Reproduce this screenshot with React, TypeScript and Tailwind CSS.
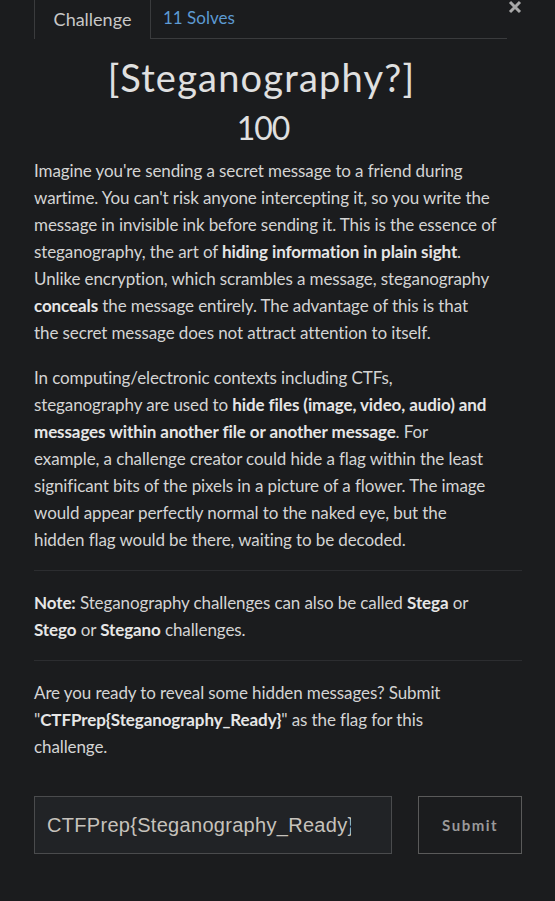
import React from "react";

const B = ({ children }: { children: React.ReactNode }) => <b className="text-[#e6e6e6]">{children}</b>;

export default function App() {
  return (
    <div className="min-h-[901px] w-[555px] bg-[#1b1c1e] text-[#d4d4d4] overflow-hidden" style={{ fontFamily: "Lato, 'Open Sans', sans-serif" }}>
      <div className="relative pl-[34px] pr-[33px]">
        <button aria-label="Close" className="absolute right-[33px] top-[2px] w-[14px] h-[14px]">
          <svg viewBox="0 0 14 14" width="14" height="14">
            <path d="M2 2 L12 12 M12 2 L2 12" stroke="#a8a8a8" strokeWidth="3" strokeLinecap="butt" />
          </svg>
        </button>
        <div className="flex mr-[15px] border-b border-[#3a3b3d] h-[41px] -mt-[2px]">
          <div className="w-[117px] border border-b-0 border-[#3a3b3d] flex items-center justify-center text-[18px] text-[#c8c8c8] -mb-px bg-[#1b1c1e]">Challenge</div>
          <div className="pl-[12px] flex items-center text-[17px] text-[#5d9ad3]">11 Solves</div>
        </div>
        <h2 className="text-center text-[38px] leading-none mt-[19px] mr-[33px] text-[#e0e0e0] tracking-[1.2px]">[Steganography?]</h2>
        <div className="text-center text-[32px] leading-none mt-[16px] mr-[30px] text-[#e0e0e0] tracking-[-1px]">100</div>
        <div className="mt-[13px] text-[17px] leading-[27px] tracking-[-0.1px]">
          <p>
            Imagine you're sending a secret message to a friend during<br />
            wartime. You can't risk anyone intercepting it, so you write the<br />
            message in invisible ink before sending it. This is the essence of<br />
            steganography, the art of <B>hiding information in plain sight</B>.<br />
            Unlike encryption, which scrambles a message, steganography<br />
            <B>conceals</B> the message entirely. The advantage of this is that<br />
            the secret message does not attract attention to itself.
          </p>
          <p className="mt-[18px]">
            In computing/electronic contexts including CTFs,<br />
            steganography are used to <B>hide files (image, video, audio) and<br />
            messages within another file or another message</B>. For<br />
            example, a challenge creator could hide a flag within the least<br />
            significant bits of the pixels in a picture of a flower. The image<br />
            would appear perfectly normal to the naked eye, but the<br />
            hidden flag would be there, waiting to be decoded.
          </p>
          <hr className="mt-[17px] mb-[18px] border-[#2c2d30]" />
          <p>
            <B>Note:</B> Steganography challenges can also be called <B>Stega</B> or<br />
            <B>Stego</B> or <B>Stegano</B> challenges.
          </p>
          <hr className="mt-[17px] mb-[18px] border-[#2c2d30]" />
          <p>
            Are you ready to reveal some hidden messages? Submit<br />
            "<B>CTFPrep{"{"}Steganography_Ready{"}"}</B>" as the flag for this<br />
            challenge.
          </p>
        </div>
        <div className="flex mt-[36px] gap-[26px]">
          <input
            readOnly
            value="CTFPrep{Steganography_Ready}"
            className="w-[359px] h-[58px] border border-[#4a4b4d] bg-[#212326] pl-[12px] pr-[40px] text-[20px] text-[#c6c2bc] tracking-[0.3px] outline-none"
            style={{ fontFamily: "'Liberation Sans', Arial, sans-serif" }}
          />
          <button className="w-[104px] h-[58px] border border-[#5a5a5a] text-[#9a9a9a] text-[15px] font-bold tracking-[1.5px]">Submit</button>
        </div>
      </div>
    </div>
  );
}
